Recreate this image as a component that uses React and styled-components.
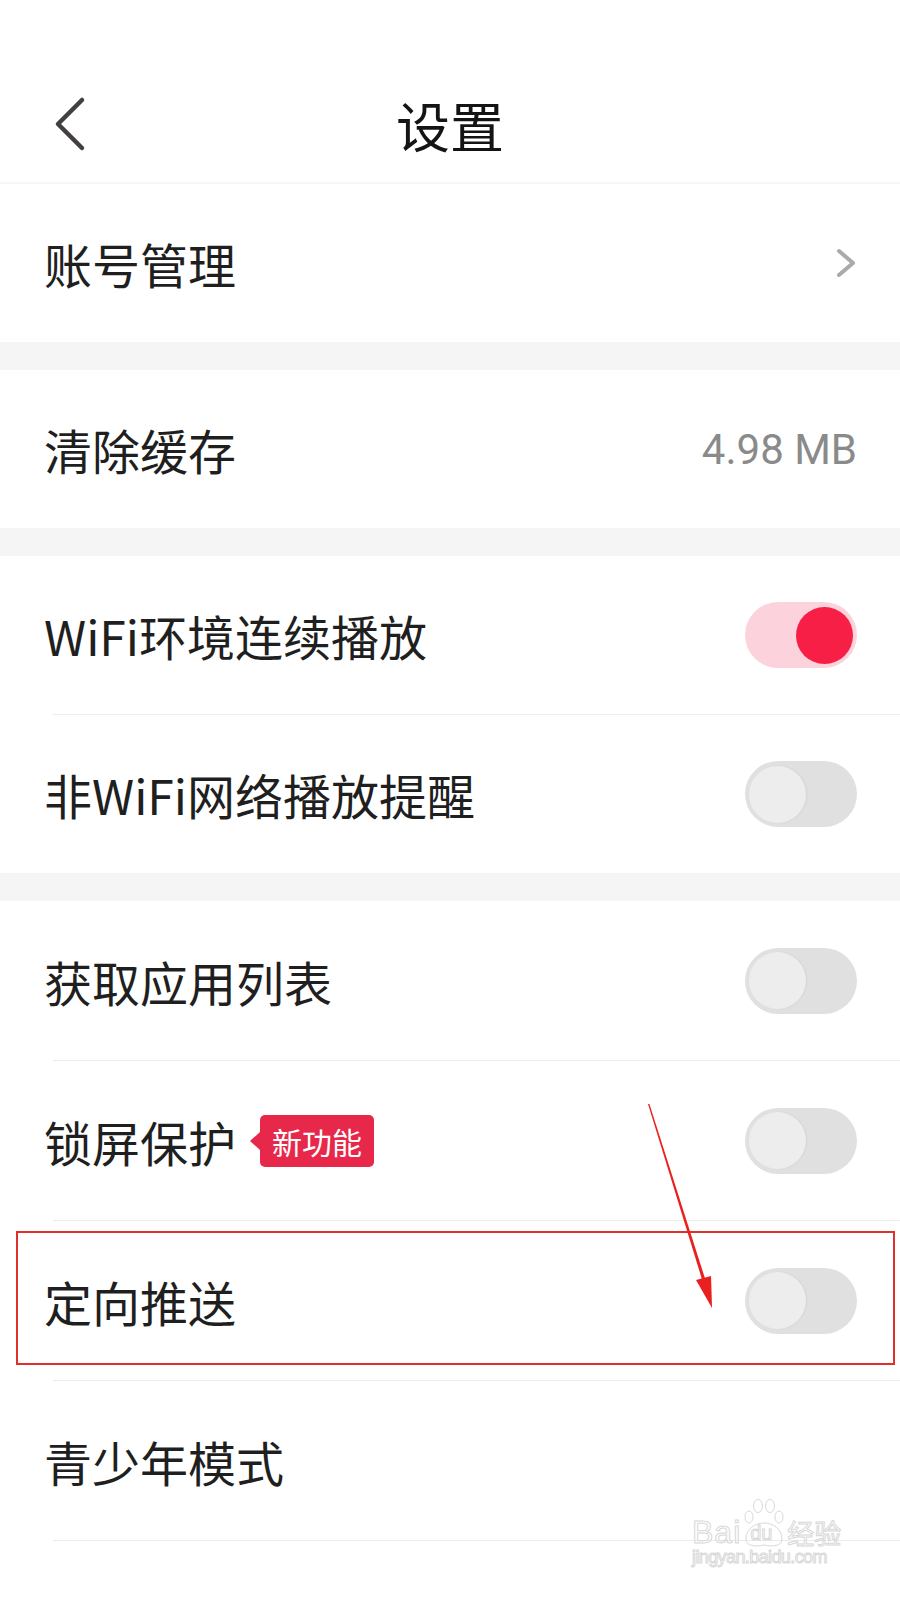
import React from "react";
import styled, { createGlobalStyle } from "styled-components";

const GlobalStyle = createGlobalStyle`
  body {
    margin: 0;
    background: #ffffff;
    font-family: "Noto Sans CJK SC", "Noto Sans", sans-serif;
    color: #1f1f1f;
  }
`;

const Page = styled.div`
  position: relative;
  width: 900px;
  height: 1600px;
  overflow: hidden;
  background: #ffffff;
`;

const StatusBar = styled.div`
  height: 64px;
`;

const NavBar = styled.div`
  position: relative;
  height: 120px;
  display: flex;
  align-items: center;
  justify-content: center;
  border-bottom: 2px solid #f6f6f6;
  box-sizing: border-box;
`;

const BackButton = styled.div`
  position: absolute;
  left: 50px;
  top: 30px;
  width: 40px;
  height: 60px;
`;

const Title = styled.h1`
  margin: 0;
  font-size: 54px;
  font-weight: 400;
  color: #141414;
  line-height: 1;
  margin-top: 4px;
`;

const Gap = styled.div`
  height: 28px;
  background: #f5f5f5;
`;

const Row = styled.div`
  position: relative;
  height: ${(p) => p.$h || 158}px;
  display: flex;
  align-items: center;
  justify-content: space-between;
  padding: 0 43px 0 44px;
  box-sizing: border-box;
`;

const Divider = styled.div`
  height: 1px;
  margin-left: 53px;
  background: #ececec;
`;

const LabelWrap = styled.div`
  display: flex;
  align-items: center;
`;

const Label = styled.span`
  font-size: 48px;
  line-height: 1;
  color: #1f1f1f;
`;

const Value = styled.span`
  font-family: Roboto, "Noto Sans", sans-serif;
  font-size: 42px;
  color: #8a8a8a;
`;

const Badge = styled.span`
  position: relative;
  margin-left: 24px;
  height: 52px;
  padding: 0 12px;
  display: flex;
  align-items: center;
  background: #e8284a;
  border-radius: 5px;
  color: #fff;
  font-size: 30px;
  line-height: 1;

  &::before {
    content: "";
    position: absolute;
    left: -10px;
    top: 17px;
    border-top: 9px solid transparent;
    border-bottom: 9px solid transparent;
    border-right: 10px solid #e8284a;
  }
`;

const Track = styled.div`
  width: 112px;
  height: 66px;
  border-radius: 33px;
  background: ${(p) => (p.$on ? "#fcd3dc" : "#e0e0e0")};
  display: flex;
  align-items: center;
  justify-content: ${(p) => (p.$on ? "flex-end" : "flex-start")};
  padding: 0 4px;
  box-sizing: border-box;
`;

const Knob = styled.div`
  width: 57px;
  height: 57px;
  border-radius: 50%;
  background: ${(p) => (p.$on ? "#f71f45" : "#ededed")};
  box-shadow: ${(p) => (p.$on ? "none" : "1px 0 2px rgba(0,0,0,0.06)")};
`;

const Highlight = styled.div`
  position: absolute;
  left: 16px;
  right: 5px;
  top: 10px;
  bottom: 15px;
  border: 2px solid #e0302e;
  pointer-events: none;
`;

const ArrowLayer = styled.svg`
  position: absolute;
  left: 0;
  top: 0;
  pointer-events: none;
`;

const Watermark = styled.div`
  position: absolute;
  left: 692px;
  top: 1498px;
  width: 162px;
  display: flex;
  flex-direction: column;
  align-items: flex-start;
  color: transparent;
  -webkit-text-stroke: 1px #d8d8d8;
  pointer-events: none;
`;

const MarkTop = styled.div`
  display: flex;
  align-items: flex-end;
  gap: 1px;
`;

const MarkWord = styled.span`
  font-family: "Liberation Sans", Arial, sans-serif;
  font-size: ${(p) => p.$size}px;
  line-height: 1;
  letter-spacing: ${(p) => p.$ls || 0}px;
`;

const PawMark = styled.div`
  position: relative;
  width: 44px;
  height: 50px;
`;

const PawText = styled.span`
  position: absolute;
  left: 8px;
  bottom: 5px;
  font-family: "Liberation Sans", Arial, sans-serif;
  font-size: 20px;
  line-height: 1;
`;

const MarkCjk = styled.span`
  font-family: "Noto Sans CJK SC", sans-serif;
  font-size: 27px;
  line-height: 1;
  margin-bottom: 2px;
`;

const Chevron = ({ color = "#aaaaaa" }) => (
  <svg width="22" height="32" viewBox="0 0 22 32">
    <path d="M4 4 L18 16 L4 28" fill="none" stroke={color} strokeWidth="4" strokeLinecap="round" strokeLinejoin="round" />
  </svg>
);

const Toggle = ({ on }) => (
  <Track $on={on}>
    <Knob $on={on} />
  </Track>
);

const Paw = () => (
  <PawMark>
    <svg width="44" height="50" viewBox="0 0 44 50" fill="none" stroke="#d8d8d8" strokeWidth="1">
      <ellipse cx="7" cy="19" rx="4" ry="6" />
      <ellipse cx="16" cy="8" rx="4.5" ry="6.5" />
      <ellipse cx="28" cy="8" rx="4.5" ry="6.5" />
      <ellipse cx="37" cy="19" rx="4" ry="6" />
      <path d="M4 41 C4 31 13 25 22 25 C31 25 40 31 40 41 C40 48 31 49 22 47 C13 49 4 48 4 41 Z" />
    </svg>
    <PawText>du</PawText>
  </PawMark>
);

const App = () => {
  return (
    <Page>
      <GlobalStyle />
      <StatusBar />
      <NavBar>
        <BackButton>
          <svg width="40" height="60" viewBox="0 0 40 60">
            <path d="M32 6 L8 30 L32 54" fill="none" stroke="#433f40" strokeWidth="4.5" strokeLinecap="round" strokeLinejoin="round" />
          </svg>
        </BackButton>
        <Title>设置</Title>
      </NavBar>

      <Row>
        <Label>账号管理</Label>
        <Chevron />
      </Row>
      <Gap />
      <Row>
        <Label>清除缓存</Label>
        <Value>4.98 MB</Value>
      </Row>
      <Gap />
      <Row>
        <Label>WiFi环境连续播放</Label>
        <Toggle on />
      </Row>
      <Divider />
      <Row>
        <Label>非WiFi网络播放提醒</Label>
        <Toggle />
      </Row>
      <Gap />
      <Row $h={159}>
        <Label>获取应用列表</Label>
        <Toggle />
      </Row>
      <Divider />
      <Row $h={159}>
        <LabelWrap>
          <Label>锁屏保护</Label>
          <Badge>新功能</Badge>
        </LabelWrap>
        <Toggle />
      </Row>
      <Divider />
      <Row $h={159}>
        <Label>定向推送</Label>
        <Toggle />
        <Highlight />
      </Row>
      <Divider />
      <Row $h={159}>
        <Label>青少年模式</Label>
      </Row>
      <Divider />
      <Row $h={159}>
        <Label>关于我们</Label>
      </Row>

      <ArrowLayer width="900" height="1600" viewBox="0 0 900 1600">
        <path d="M648 1104 L649.4 1104 L705.5 1280 L702.5 1281 Z" fill="#e8201f" />
        <path d="M696 1280 L712 1308 L711 1276 Z" fill="#e8201f" />
      </ArrowLayer>

      <Watermark>
        <MarkTop>
          <MarkWord $size={32} $ls={1}>Bai</MarkWord>
          <Paw />
          <MarkCjk>经验</MarkCjk>
        </MarkTop>
        <MarkWord $size={18} $ls={-0.6}>jingyan.baidu.com</MarkWord>
      </Watermark>
    </Page>
  );
};

export default App;
